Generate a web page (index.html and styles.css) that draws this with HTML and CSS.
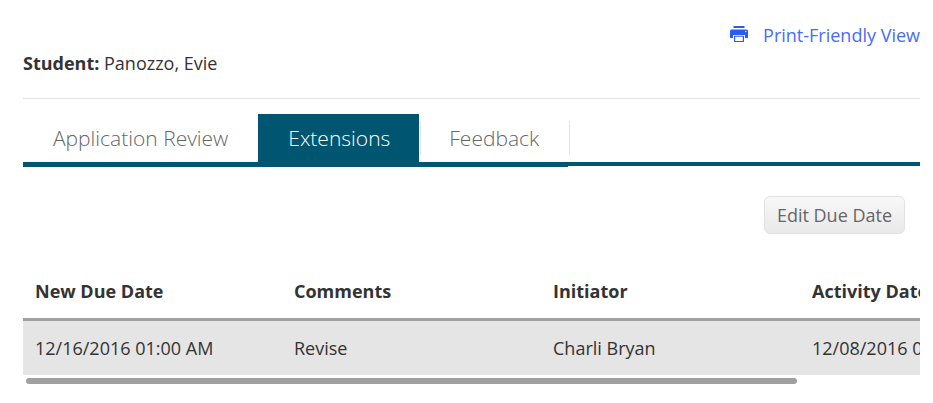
FILE: index.html
```html
<!DOCTYPE html>
<html lang="en">
<head>
<meta charset="utf-8">
<title>Extensions</title>
<link rel="stylesheet" href="styles.css">
</head>
<body>
<div class="page">
  <div class="print-row">
    <a class="print-link" href="#">
      <svg class="print-icon" viewBox="0 0 18 16" aria-hidden="true"><path d="M3.500 0h11v2h-11zM1.500 3.500h15A1.500 1.500 0 0 1 18 5v7h-3V9H3v3H0V5a1.500 1.500 0 0 1 1.500-1.500z"/><path d="M4 9.800h10V16H4zM5.200 10.800v4.100h7.600v-4.100z" fill-rule="evenodd"/><circle cx="15.800" cy="5.500" r=".7" fill="#fff"/></svg>
      <span>Print-Friendly View</span>
    </a>
  </div>
  <p class="student"><strong>Student:</strong> Panozzo, Evie</p>
  <nav class="tabs">
    <a class="tab" href="#">Application Review</a>
    <a class="tab active" href="#">Extensions</a>
    <a class="tab sep" href="#">Feedback</a>
  </nav>
  <div class="actions"><button class="btn" type="button">Edit Due Date</button></div>
  <div class="table-wrap">
    <table class="grid">
      <thead>
        <tr><th>New Due Date</th><th>Comments</th><th>Initiator</th><th>Activity Date</th></tr>
      </thead>
      <tbody>
        <tr><td>12/16/2016 01:00 AM</td><td>Revise</td><td>Charli Bryan</td><td>12/08/2016 01:00 AM</td></tr>
      </tbody>
    </table>
  </div>
  <div class="scrollbar"><div class="thumb"></div></div>
</div>
</body>
</html>
```
FILE: styles.css
```css
* { box-sizing: border-box; }
html, body { margin: 0; background: #fff; overflow: hidden; }
body { font-family: "Open Sans", sans-serif; color: #333; }
.page { padding: 0 13px 0 23px; height: 403px; }
.print-row { display: flex; justify-content: flex-end; height: 52px; padding-top: 22px; }
.print-link { display: flex; align-items: center; height: 26px; gap: 15px; color: #4a6cf7; text-decoration: none; font-size: 18px; line-height: 26px; }
.print-icon { width: 18px; height: 16px; fill: #2a5bf0; display: block; margin-top: -2px; }
.student { margin: 0; height: 47px; line-height: 22px; font-size: 18px; border-bottom: 1px solid #e3e3e3; }
.student strong { font-weight: 700; }
.tabs { display: flex; margin-top: 15px; height: 52px; border-bottom: 4px solid #005670; }
.tab { display: flex; align-items: center; height: 53px; flex: none; padding: 0 30px 4px; font-size: 21px; font-weight: 300; color: #666; text-decoration: none; border-bottom: 1px solid #005670; }
.tab.active { background: #005670; color: #fff; padding-right: 29px; }
.tab.sep { position: relative; padding: 0 29px 5px 30px; }
.tab.sep::before, .tab.sep::after { content: ""; position: absolute; top: 7px; height: 34px; width: 1px; background: #e3e3e3; }
.tab.sep::before { left: 1px; }
.tab.sep::after { right: -2px; }
.actions { display: flex; justify-content: flex-end; margin-top: 30px; padding-right: 15px; }
.btn { height: 38px; padding: 0 12px; font: 400 18px "Open Sans", sans-serif; color: #666; border: 1px solid #e2e2e2; border-radius: 6px; background: linear-gradient(#f8f8f8, #e9e9e9); }
.table-wrap { margin-top: 33px; overflow: hidden; }
.grid { table-layout: fixed; width: 1036px; border-collapse: separate; border-spacing: 0; font-size: 18px; }
.grid th { height: 54px; padding: 0 12px 3px; text-align: left; font-weight: 700; white-space: nowrap; overflow: hidden; border-bottom: 3px solid #a0a0a0; }
.grid td { height: 54px; padding: 0 12px; white-space: nowrap; overflow: hidden; background: #e5e5e5; }
.scrollbar { height: 9px; padding: 3px 3px 0; }
.thumb { width: 771px; height: 6px; border-radius: 3px; background: #a0a0a0; }
```
